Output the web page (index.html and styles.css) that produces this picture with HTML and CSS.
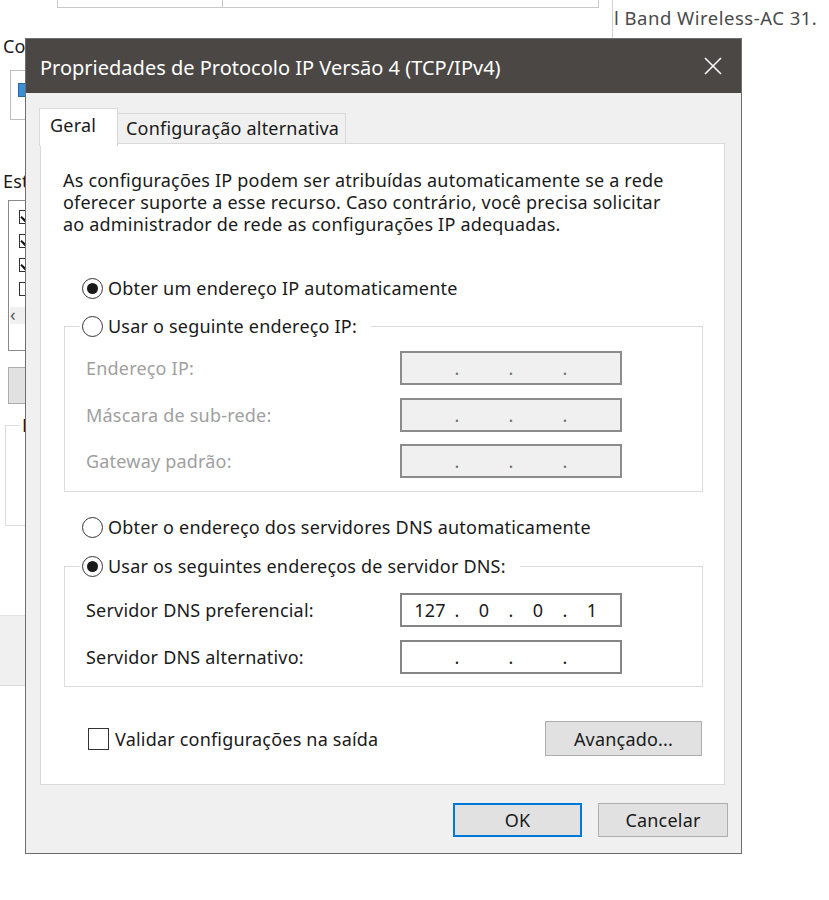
FILE: index.html
```html
<!DOCTYPE html>
<html lang="pt-BR">
<head>
<meta charset="utf-8">
<title>Propriedades de Protocolo IP Versão 4 (TCP/IPv4)</title>
<link rel="stylesheet" href="styles.css">
</head>
<body>
<div class="desktop">
  <div class="bgwin">
    <div class="bg-tabs">
      <span class="bg-tab bg-tab-1">Compartilhamento</span>
      <span class="bg-tab bg-tab-2"></span>
    </div>
    <div class="bg-content">
      <div class="bg-label">Conectar-se usando:</div>
      <div class="bg-adapter"><span class="bg-icon"></span>Intel(R) Dual Band Wireless-AC 3165</div>
      <div class="bg-label bg-label-2">Esta conexão utiliza os seguintes itens:</div>
      <div class="bg-list">
        <div class="bg-item"><span class="bg-check on"></span>Cliente para Redes Microsoft</div>
        <div class="bg-item"><span class="bg-check on"></span>Compartilhamento de Arquivos</div>
        <div class="bg-item"><span class="bg-check on"></span>Agendador de Pacotes QoS</div>
        <div class="bg-item"><span class="bg-check"></span>Protocolo IP Versão 4</div>
        <div class="bg-scroll">&lsaquo;</div>
      </div>
      <div class="bg-button">Instalar...</div>
      <fieldset class="bg-group"><legend>Descrição</legend></fieldset>
    </div>
    <div class="bg-footer"></div>
  </div>
  <div class="bgright">l Band Wireless-AC 31.</div>
</div>

<div class="dialog">
  <div class="titlebar">
    <span class="title">Propriedades de Protocolo IP Versão 4 (TCP/IPv4)</span>
    <svg class="close" width="18" height="18" viewBox="0 0 18 18"><path d="M1 1 L17 17 M17 1 L1 17" stroke="#ffffff" stroke-width="1.6" fill="none"/></svg>
  </div>
  <div class="dlg-body">
    <div class="tabs">
      <div class="tab tab-active">Geral</div>
      <div class="tab">Configuração alternativa</div>
    </div>
    <div class="panel">
      <p class="intro">As configurações IP podem ser atribuídas automaticamente se a rede<br>oferecer suporte a esse recurso. Caso contrário, você precisa solicitar<br>ao administrador de rede as configurações IP adequadas.</p>

      <div class="radio-row first"><span class="radio checked"></span>Obter um endereço IP automaticamente</div>

      <fieldset class="group group-ip">
        <legend class="radio-row legend"><span class="radio"></span>Usar o seguinte endereço IP:</legend>
        <div class="field disabled">
          <span class="field-label">Endereço IP:</span>
          <div class="ipbox"><span class="seg"></span><span class="dot">.</span><span class="seg"></span><span class="dot">.</span><span class="seg"></span><span class="dot">.</span><span class="seg"></span></div>
        </div>
        <div class="field disabled">
          <span class="field-label">Máscara de sub-rede:</span>
          <div class="ipbox"><span class="seg"></span><span class="dot">.</span><span class="seg"></span><span class="dot">.</span><span class="seg"></span><span class="dot">.</span><span class="seg"></span></div>
        </div>
        <div class="field disabled">
          <span class="field-label">Gateway padrão:</span>
          <div class="ipbox"><span class="seg"></span><span class="dot">.</span><span class="seg"></span><span class="dot">.</span><span class="seg"></span><span class="dot">.</span><span class="seg"></span></div>
        </div>
      </fieldset>

      <div class="radio-row dns-auto"><span class="radio"></span>Obter o endereço dos servidores DNS automaticamente</div>

      <fieldset class="group group-dns">
        <legend class="radio-row legend"><span class="radio checked"></span>Usar os seguintes endereços de servidor DNS:</legend>
        <div class="field">
          <span class="field-label">Servidor DNS preferencial:</span>
          <div class="ipbox"><span class="seg">127</span><span class="dot">.</span><span class="seg">0</span><span class="dot">.</span><span class="seg">0</span><span class="dot">.</span><span class="seg">1</span></div>
        </div>
        <div class="field">
          <span class="field-label">Servidor DNS alternativo:</span>
          <div class="ipbox"><span class="seg"></span><span class="dot">.</span><span class="seg"></span><span class="dot">.</span><span class="seg"></span><span class="dot">.</span><span class="seg"></span></div>
        </div>
      </fieldset>

      <div class="options-row">
        <div class="check-row"><span class="checkbox"></span>Validar configurações na saída</div>
        <button class="btn btn-adv">Avançado...</button>
      </div>
    </div>
    <div class="actions">
      <button class="btn btn-ok">OK</button>
      <button class="btn">Cancelar</button>
    </div>
  </div>
</div>
</body>
</html>
```

FILE: styles.css
```css
* { box-sizing: border-box; }

html, body {
  margin: 0;
  padding: 0;
  background: #ffffff;
}

body {
  width: 829px;
  height: 900px;
  overflow: hidden;
  position: relative;
  font-family: "Noto Sans", "Open Sans", "DejaVu Sans", sans-serif;
  font-size: 18px;
  letter-spacing: 0.2px;
  color: #1a1a1a;
}

/* ---------- background windows ---------- */
.desktop {
  display: flex;
  align-items: flex-start;
}

.bgwin {
  width: 613px;
  height: 686px;
  border-right: 1px solid #d2d2d2;
  border-bottom: 1px solid #d9d9d9;
  display: flex;
  flex-direction: column;
  flex-shrink: 0;
}

.bg-tabs {
  height: 8px;
  display: flex;
  align-items: flex-end;
  padding-left: 57px;
  overflow: hidden;
}

.bg-tab {
  height: 30px;
  border: 1px solid #c9c9c9;
  background: #ffffff;
  line-height: 20px;
  color: #222;
  white-space: nowrap;
  overflow: hidden;
}

.bg-tab-1 { width: 166px; padding-left: 14px; }
.bg-tab-2 { width: 376px; border-left: none; }

.bg-content {
  flex: 1;
  padding: 27px 0 0 3px;
  display: flex;
  flex-direction: column;
  white-space: nowrap;
  overflow: hidden;
}

.bg-label {
  line-height: 22px;
  color: #1a1a1a;
}

.bg-label-2 { margin-top: 50px; }

.bg-adapter {
  margin: 13px 0 0 7px;
  height: 50px;
  border: 1px solid #bdbdbd;
  padding: 12px 0 0 7px;
  display: flex;
  align-items: flex-start;
  gap: 8px;
  color: #1a1a1a;
}

.bg-icon {
  width: 14px;
  height: 14px;
  background: #3b8fd9;
  border: 1px solid #2468a8;
  flex-shrink: 0;
}

.bg-list {
  margin: 8px 0 0 5px;
  height: 151px;
  border: 1px solid #8a8a8a;
  padding: 7px 0 0 10px;
  display: flex;
  flex-direction: column;
  gap: 6px;
  font-size: 16px;
}

.bg-item {
  display: flex;
  align-items: center;
  gap: 6px;
  height: 18px;
}

.bg-check {
  width: 14px;
  height: 14px;
  border: 1px solid #333;
  position: relative;
  flex-shrink: 0;
}

.bg-check.on::after {
  content: "";
  position: absolute;
  left: 3px;
  top: 0px;
  width: 4px;
  height: 8px;
  border: solid #111;
  border-width: 0 2px 2px 0;
  transform: rotate(45deg);
}

.bg-scroll {
  margin: 3px 0 0 -9px;
  width: 20px;
  height: 17px;
  font-size: 18px;
  line-height: 14px;
  color: #555;
  background: #f0f0f0;
}

.bg-button {
  margin: 16px 0 0 5px;
  width: 130px;
  height: 37px;
  border: 1px solid #adadad;
  background: #e1e1e1;
  line-height: 35px;
  padding-left: 30px;
}

.bg-group {
  margin: 12px 0 0 2px;
  height: 110px;
  width: 580px;
  border: 1px solid #dcdcdc;
  padding: 0 0 0 10px;
}

.bg-group legend {
  padding: 0 2px;
  margin-left: 4px;
  line-height: 18px;
}

.bg-footer {
  height: 70px;
  background: #f0f0f0;
  border-top: 1px solid #e3e3e3;
}

.bgright {
  padding: 7px 0 0 1px;
  font-size: 18.5px;
  letter-spacing: 0.5px;
  line-height: 22px;
  color: #4a4a4a;
  white-space: nowrap;
}

/* ---------- dialog ---------- */
.dialog {
  position: absolute;
  left: 25px;
  top: 38px;
  width: 717px;
  height: 816px;
  border: 1px solid #6e6e6e;
  background: #f0f0f0;
  display: flex;
  flex-direction: column;
}

.titlebar {
  height: 54px;
  background: #4b4744;
  color: #ffffff;
  display: flex;
  align-items: center;
  justify-content: space-between;
  padding: 0 19px 0 14px;
  flex-shrink: 0;
}

.title {
  font-size: 20px;
  letter-spacing: 0px;
  margin-top: 2px;
}

.close { display: block; }

.dlg-body {
  flex: 1;
  padding: 15px 13px 0 13px;
  display: flex;
  flex-direction: column;
}

.tabs {
  display: flex;
  align-items: flex-end;
  height: 35px;
  position: relative;
  z-index: 1;
}

.tab {
  height: 30px;
  border: 1px solid #d9d9d9;
  border-bottom: none;
  background: #f0f0f0;
  padding: 0 6px 0 8px;
  line-height: 28px;
  color: #1a1a1a;
  white-space: nowrap;
}

.tab + .tab { border-left: none; }

.tab-active {
  height: 38px;
  width: 79px;
  margin-bottom: -3px;
  background: #ffffff;
  padding: 0 0 0 10px;
  line-height: 32px;
  border-color: #d9d9d9;
}

.panel {
  margin: 0 3px 0 1px;
  height: 642px;
  border: 1px solid #d9d9d9;
  background: #ffffff;
  padding: 25px 21px 0 22px;
  display: flex;
  flex-direction: column;
}

.intro {
  margin: 0;
  line-height: 22px;
  white-space: nowrap;
}

.radio-row {
  display: flex;
  align-items: center;
  height: 22px;
  white-space: nowrap;
  padding-left: 19px;
}

.radio-row.first { margin-top: 42px; }
.radio-row.dns-auto { margin-top: 24px; }

.radio {
  width: 21px;
  height: 21px;
  border: 1.6px solid #333333;
  border-radius: 50%;
  margin-right: 5px;
  flex-shrink: 0;
  display: flex;
  align-items: center;
  justify-content: center;
  background: #fff;
}

.radio.checked::after {
  content: "";
  width: 11px;
  height: 11px;
  border-radius: 50%;
  background: #1a1a1a;
}

.group {
  margin: 16px 0 0 1px;
  border: 1px solid #dcdcdc;
  padding: 14px 0 13px 21px;
  display: flex;
  flex-direction: column;
  gap: 12.5px;
  min-width: 0;
}

.group-dns {
  margin-top: 17px;
  padding-top: 16px;
  padding-bottom: 12px;
  gap: 13px;
}

.legend {
  padding: 0 14px 0 2px;
  margin-left: -6px;
}

.field {
  display: flex;
  align-items: center;
  height: 34px;
}

.field-label {
  width: 314px;
  flex-shrink: 0;
}

.field.disabled .field-label { color: #a0a0a0; }

.ipbox {
  width: 222px;
  height: 34px;
  border: 2px solid #858585;
  background: #ffffff;
  display: grid;
  grid-template-columns: 1fr 6px 1fr 6px 1fr 6px 1fr;
  align-items: center;
  padding: 0 4px;
  line-height: 30px;
  color: #1a1a1a;
}

.field.disabled .ipbox {
  background: #f0f0f0;
  border-color: #8c8c8c;
  color: #707070;
}

.seg { text-align: center; }
.dot { text-align: center; }

.options-row {
  margin: 34px 1px 0 0;
  height: 35px;
  display: flex;
  align-items: center;
  justify-content: space-between;
  padding-left: 25px;
}

.check-row {
  display: flex;
  align-items: center;
  white-space: nowrap;
}

.checkbox {
  width: 21px;
  height: 22px;
  border: 1.6px solid #333333;
  margin-right: 6px;
  background: #fff;
}

.btn {
  font-family: inherit;
  font-size: 18px;
  letter-spacing: 0.2px;
  color: #1a1a1a;
  background: #e1e1e1;
  border: 1px solid #adadad;
  height: 34px;
  padding: 0;
  margin: 0;
}

.btn-adv {
  width: 157px;
  height: 35px;
}

.actions {
  margin-top: 18px;
  display: flex;
  justify-content: flex-end;
  gap: 16px;
}

.actions .btn { width: 130px; }

.btn-ok {
  border: 2px solid #0078d7;
  width: 129px !important;
}
```
